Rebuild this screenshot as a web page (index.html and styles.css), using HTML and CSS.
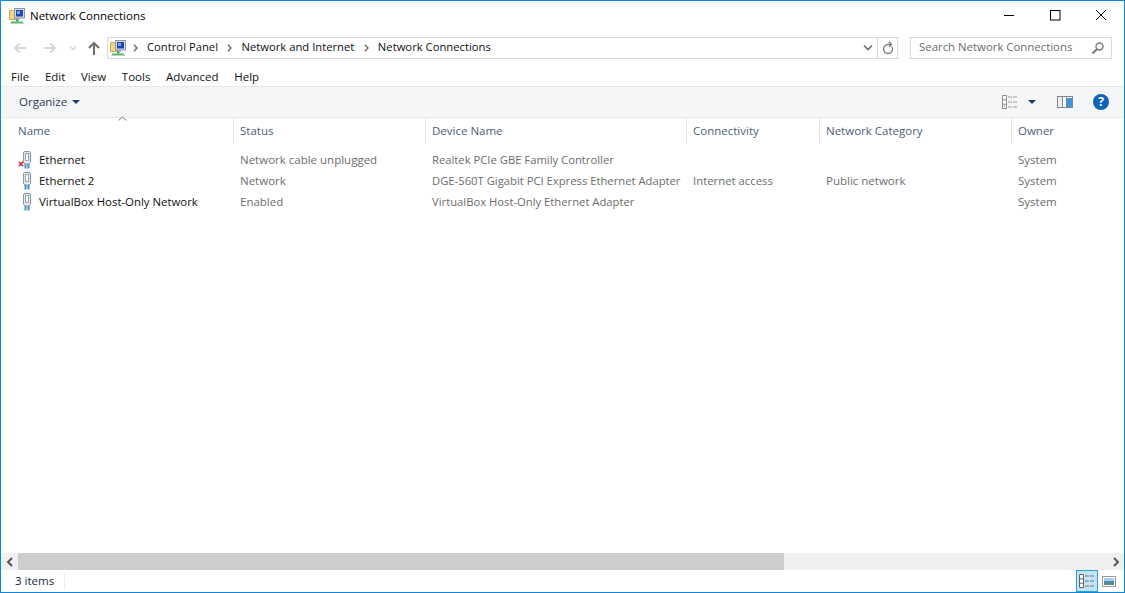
FILE: index.html
```html
<!DOCTYPE html>
<html lang="en">
<head>
<meta charset="utf-8">
<title>Network Connections</title>
<link rel="stylesheet" href="styles.css">
</head>
<body>
<svg width="0" height="0" class="defs">
  <defs>
    <symbol id="netfolder" viewBox="0 0 16 16">
      <path d="M0.5 2.5h4l1 1h3v8h-8z" fill="#f3d67e" stroke="#c9ab58"/>
      <rect x="5.5" y="0.5" width="10" height="9.5" fill="#d5dbe3" stroke="#8a97a8"/>
      <rect x="7" y="2" width="7" height="6.5" fill="#1d46b4"/>
      <rect x="8" y="3" width="3" height="3" fill="#7fa5e8"/>
      <rect x="6" y="10" width="5" height="1.5" fill="#9aa6b4"/>
      <rect x="7" y="11.5" width="2.5" height="2" fill="#35a84a"/>
      <rect x="2" y="13.5" width="12" height="1.5" fill="#46c05c"/>
      <rect x="1" y="15" width="14" height="1" fill="#c4cbd2"/>
    </symbol>
    <symbol id="plug" viewBox="0 0 12 18">
      <path d="M2.500 2a1.500 1.500 0 0 1 1.500-1.500h4a1.500 1.500 0 0 1 1.500 1.500v9.500l-1.500 1.500h-4l-1.500-1.500z" fill="#e4e8ed" stroke="#8b97a5"/>
      <rect x="4.500" y="2.500" width="3" height="7" fill="#fff" stroke="#9aa6b3"/>
      <rect x="3.500" y="13" width="2" height="4.500" fill="#3f94cf"/>
      <rect x="5.500" y="13" width="1" height="2.500" fill="#a9bccb"/>
      <rect x="6.500" y="13" width="2" height="4.500" fill="#3f94cf"/>
    </symbol>
  </defs>
</svg>
<div class="window">
  <header class="titlebar">
    <svg class="title-icon"><use href="#netfolder"/></svg>
    <span class="title-text">Network Connections</span>
    <div class="caption">
      <svg class="cap-btn" viewBox="0 0 46 16"><path d="M18 10.500h10" stroke="#000" fill="none"/></svg>
      <svg class="cap-btn" viewBox="0 0 46 16"><rect x="18.500" y="5.500" width="9.500" height="9.500" stroke="#000" fill="none"/></svg>
      <svg class="cap-btn" viewBox="0 0 46 16"><path d="M18 5l10 10M28 5L18 15" stroke="#000" fill="none"/></svg>
    </div>
  </header>

  <nav class="navbar">
    <svg class="nav-btn back" viewBox="0 0 16 16"><path d="M14 8H3M7.500 3.500L3 8l4.500 4.500" stroke="#d3d6da" stroke-width="2" fill="none"/></svg>
    <svg class="nav-btn fwd" viewBox="0 0 16 16"><path d="M2 8h11M8.500 3.500L13 8l-4.500 4.500" stroke="#d3d6da" stroke-width="2" fill="none"/></svg>
    <svg class="nav-chev" viewBox="0 0 8 6"><path d="M1 1.500l3 3 3-3" stroke="#d3d6da" stroke-width="1.300" fill="none"/></svg>
    <svg class="nav-btn up" viewBox="0 0 16 16"><path d="M8 15V3M3 8l5-5 5 5" stroke="#6d6d6d" stroke-width="2" fill="none"/></svg>
    <div class="address">
      <svg class="addr-icon"><use href="#netfolder"/></svg>
      <svg class="crumb-sep" viewBox="0 0 5 8"><path d="M1 .8L4 4 1 7.200" stroke="#6d6d6d" stroke-width="1.400" fill="none"/></svg><span class="crumb">Control Panel</span>
      <svg class="crumb-sep" viewBox="0 0 5 8"><path d="M1 .8L4 4 1 7.200" stroke="#6d6d6d" stroke-width="1.400" fill="none"/></svg><span class="crumb">Network and Internet</span>
      <svg class="crumb-sep" viewBox="0 0 5 8"><path d="M1 .8L4 4 1 7.200" stroke="#6d6d6d" stroke-width="1.400" fill="none"/></svg><span class="crumb">Network Connections</span>
      <svg class="addr-drop" viewBox="0 0 10 7"><path d="M1 1.500l4 4 4-4" stroke="#6d6d6d" stroke-width="1.600" fill="none"/></svg>
      <span class="addr-refresh">
        <svg viewBox="0 0 12 14" width="12" height="14"><path d="M9.800 5.500A4.500 4.500 0 1 1 6 3.500H9M7 0.800L9.500 3.500 7 6" stroke="#7b7b7b" stroke-width="1.300" fill="none"/></svg>
      </span>
    </div>
    <div class="search">
      <span class="search-text">Search Network Connections</span>
      <svg class="search-icon" viewBox="0 0 14 14"><circle cx="8.500" cy="5.500" r="3.500" stroke="#7b7b7b" stroke-width="1.400" fill="none"/><path d="M6 8l-4.500 4.500" stroke="#7b7b7b" stroke-width="2" fill="none"/></svg>
    </div>
  </nav>

  <div class="menubar">
    <span>File</span><span>Edit</span><span>View</span><span>Tools</span><span>Advanced</span><span>Help</span>
  </div>

  <div class="toolbar">
    <span class="organize">Organize</span>
    <span class="caret"></span>
    <div class="tool-right">
      <svg class="view-icon" viewBox="0 0 17 14"><path d="M.5.500h4v13h-4zM.5 4.800h4M.5 9.200h4" stroke="#8d8d8d" fill="#fff"/><rect x="2" y="10.500" width="1" height="1" fill="#c0392b"/><path d="M6 2h4M11 2h4M6 7h4M11 7h4M6 12h4M11 12h4" stroke="#9a9a9a" fill="none"/></svg>
      <span class="caret dark"></span>
      <svg class="pane-icon" viewBox="0 0 16 12"><rect x=".5" y=".5" width="15" height="11" fill="#fff" stroke="#7d8792"/><rect x="1" y="1" width="4" height="10" fill="#e9edf1"/><path d="M5.500 1v10M9.500 1v10" stroke="#7d8792"/><rect x="10" y="2" width="5" height="9" fill="#3f94e0"/></svg>
      <span class="help-icon">?</span>
    </div>
  </div>

  <main class="content">
    <div class="sort-arrow"><svg viewBox="0 0 9 5" width="9" height="5"><path d="M.5 4.500l4-3.500 4 3.500" stroke="#7b7b7b" fill="none"/></svg></div>
    <div class="grid head">
      <div class="hcell first">Name</div>
      <div class="hcell">Status</div>
      <div class="hcell">Device Name</div>
      <div class="hcell">Connectivity</div>
      <div class="hcell">Network Category</div>
      <div class="hcell last">Owner</div>
    </div>
    <div class="rows">
      <div class="grid row">
        <div class="name"><span class="plug-wrap"><svg class="plug"><use href="#plug"/></svg><svg class="xmark" viewBox="0 0 6 6"><path d="M.8.800l4.400 4.400M5.200.800L.8 5.200" stroke="#d3202a" stroke-width="1.400"/></svg></span>Ethernet</div>
        <div class="cell">Network cable unplugged</div>
        <div class="cell device">Realtek PCIe GBE Family Controller</div>
        <div class="cell"></div>
        <div class="cell"></div>
        <div class="cell">System</div>
      </div>
      <div class="grid row">
        <div class="name"><span class="plug-wrap"><svg class="plug"><use href="#plug"/></svg></span>Ethernet 2</div>
        <div class="cell">Network</div>
        <div class="cell device">DGE-560T Gigabit PCI Express Ethernet Adapter</div>
        <div class="cell conn">Internet access</div>
        <div class="cell">Public network</div>
        <div class="cell">System</div>
      </div>
      <div class="grid row">
        <div class="name"><span class="plug-wrap"><svg class="plug"><use href="#plug"/></svg></span>VirtualBox Host-Only Network</div>
        <div class="cell">Enabled</div>
        <div class="cell device">VirtualBox Host-Only Ethernet Adapter</div>
        <div class="cell"></div>
        <div class="cell"></div>
        <div class="cell">System</div>
      </div>
    </div>
  </main>

  <div class="hscroll">
    <span class="sb-btn"><svg viewBox="0 0 8 10" width="8" height="10"><path d="M6 1L2 5l4 4" stroke="#555" stroke-width="2" fill="none"/></svg></span>
    <span class="sb-thumb"></span>
    <span class="sb-track"></span>
    <span class="sb-btn"><svg viewBox="0 0 8 10" width="8" height="10"><path d="M2 1l4 4-4 4" stroke="#555" stroke-width="2" fill="none"/></svg></span>
  </div>

  <footer class="statusbar">
    <span class="items">3 items</span>
    <span class="status-views">
      <span class="sv-active">
        <svg viewBox="0 0 17 14" width="17" height="14"><path d="M.5.500h4v13h-4zM.5 4.800h4M.5 9.200h4" stroke="#666" fill="#fff"/><path d="M6 2h4M11 2h4M6 7h4M11 7h4M6 12h4M11 12h4" stroke="#777" fill="none"/></svg>
      </span>
      <svg class="sv-thumb" viewBox="0 0 14 11" width="14" height="11"><rect x=".5" y=".5" width="13" height="10" fill="#fff" stroke="#9a9a9a"/><rect x="2" y="2" width="10" height="3" fill="#a9cdea"/><rect x="2" y="5" width="10" height="2" fill="#3f8fc0"/><rect x="2" y="7" width="10" height="2" fill="#5d8a7d"/></svg>
    </span>
  </footer>
</div>
</body>
</html>
```

FILE: styles.css
```css
* { box-sizing: border-box; }
html, body { margin: 0; padding: 0; height: 100%; background: #fff; }
body { font-family: "Open Sans", "Noto Sans", "Liberation Sans", sans-serif; font-size: 12px; color: #000; overflow: hidden; }
.defs { display: block; height: 0; }
.window { height: 593px; width: 1125px; border: 1px solid #0f86da; display: flex; flex-direction: column; background: #fff; }

.titlebar { height: 29px; display: flex; align-items: center; padding-left: 8px; flex: none; }
.title-icon { width: 16px; height: 16px; margin-right: 5px; }
.title-text { font-size: 11.5px; color: #000; }
.caption { margin-left: auto; display: flex; align-self: flex-start; padding-top: 4px; }
.cap-btn { width: 46px; height: 16px; display: block; }

.navbar { height: 23px; margin-top: 6px; display: flex; align-items: center; flex: none; padding-left: 11px; }
.nav-btn { width: 16px; height: 16px; flex: none; }
.fwd { margin-left: 14px; }
.nav-chev { width: 8px; height: 6px; margin-left: 11px; flex: none; }
.up { margin-left: 9px; }
.address { width: 791px; height: 22px; margin-left: 5px; border: 1px solid #d9d9d9; display: flex; align-items: center; padding-left: 2px; flex: none; }
.addr-icon { width: 16px; height: 16px; flex: none; margin-right: 7px; }
.crumb-sep { width: 5px; height: 8px; margin-right: 9px; flex: none; }
.crumb { font-size: 11.25px; margin-right: 9.5px; padding-bottom: 2px; color: #111; white-space: nowrap; }
.addr-drop { width: 10px; height: 7px; margin-left: auto; margin-right: 4px; }
.addr-refresh { width: 20px; height: 20px; border-left: 1px solid #d9d9d9; display: flex; align-items: center; justify-content: center; }
.search { width: 202px; height: 22px; margin-left: 12px; border: 1px solid #d9d9d9; display: flex; align-items: center; padding: 0 6px 0 8px; flex: none; }
.search-text { font-size: 11.4px; color: #6d6d6d; white-space: nowrap; padding-bottom: 2px; }
.search-icon { width: 14px; height: 14px; margin-left: auto; }

.menubar { height: 27px; display: flex; align-items: center; flex: none; padding: 7px 0 0 10px; gap: 15.7px; font-size: 11.5px; color: #111; }

.toolbar { height: 32px; background: #f5f6f7; border-top: 1px solid #e6e7e8; border-bottom: 1px solid #e9eaeb; display: flex; align-items: center; padding-left: 18px; padding-bottom: 1px; flex: none; }
.organize { font-size: 11.5px; color: #2c3a55; }
.caret { width: 0; height: 0; border-left: 4px solid transparent; border-right: 4px solid transparent; border-top: 4px solid #1e3a66; margin-left: 5px; }
.tool-right { margin-left: auto; display: flex; align-items: center; padding-right: 15px; }
.view-icon { width: 17px; height: 14px; }
.caret.dark { margin-left: 9px; }
.pane-icon { width: 16px; height: 12px; margin-left: 21px; }
.help-icon { width: 16px; height: 16px; margin-left: 20px; border-radius: 50%; background: #0f63b8; color: #fff; font-size: 12px; font-weight: 700; line-height: 16px; text-align: center; }

.content { flex: 1; position: relative; min-height: 0; }
.sort-arrow { position: absolute; left: 117px; top: -2px; line-height: 0; }
.grid { display: grid; grid-template-columns: 233px 192px 261px 133px 192px 1fr; }
.head { height: 25px; }
.hcell { font-size: 11.5px; color: #4c607a; padding: 5px 0 0 6px; border-right: 1px solid #e5e5e5; white-space: nowrap; }
.hcell.first { padding-left: 17px; }
.hcell.last { border-right: 0; }
.rows { padding-top: 6px; }
.row { height: 21px; align-items: center; }
.name { display: flex; align-items: center; padding-left: 20px; font-size: 11.4px; color: #111; white-space: nowrap; }
.plug-wrap { position: relative; width: 12px; height: 18px; margin-right: 6px; flex: none; }
.plug { width: 12px; height: 18px; display: block; }
.xmark { position: absolute; left: -3px; top: 10px; width: 6px; height: 6px; }
.cell { font-size: 11.5px; color: #6d6d6d; padding-left: 6px; white-space: nowrap; }
.cell.device { font-size: 11.25px; }
.cell.conn { font-size: 11.35px; }

.hscroll { height: 17px; display: flex; flex: none; background: #f0f0f0; }
.sb-btn { width: 17px; height: 17px; display: flex; align-items: center; justify-content: center; flex: none; }
.sb-thumb { width: 766px; background: #cdcdcd; flex: none; }
.sb-track { flex: 1; }

.statusbar { height: 22px; display: flex; align-items: center; flex: none; }
.items { font-size: 11.5px; color: #1b2a44; padding-left: 14px; width: 64px; height: 18px; line-height: 18px; border-right: 1px solid #ececec; }
.status-views { margin-left: auto; display: flex; align-items: center; }
.sv-active { width: 22px; height: 22px; background: #c4e4f5; border: 1px solid #26a0da; display: flex; align-items: center; justify-content: center; }
.sv-thumb { margin: 0 8px 0 4px; }
```
